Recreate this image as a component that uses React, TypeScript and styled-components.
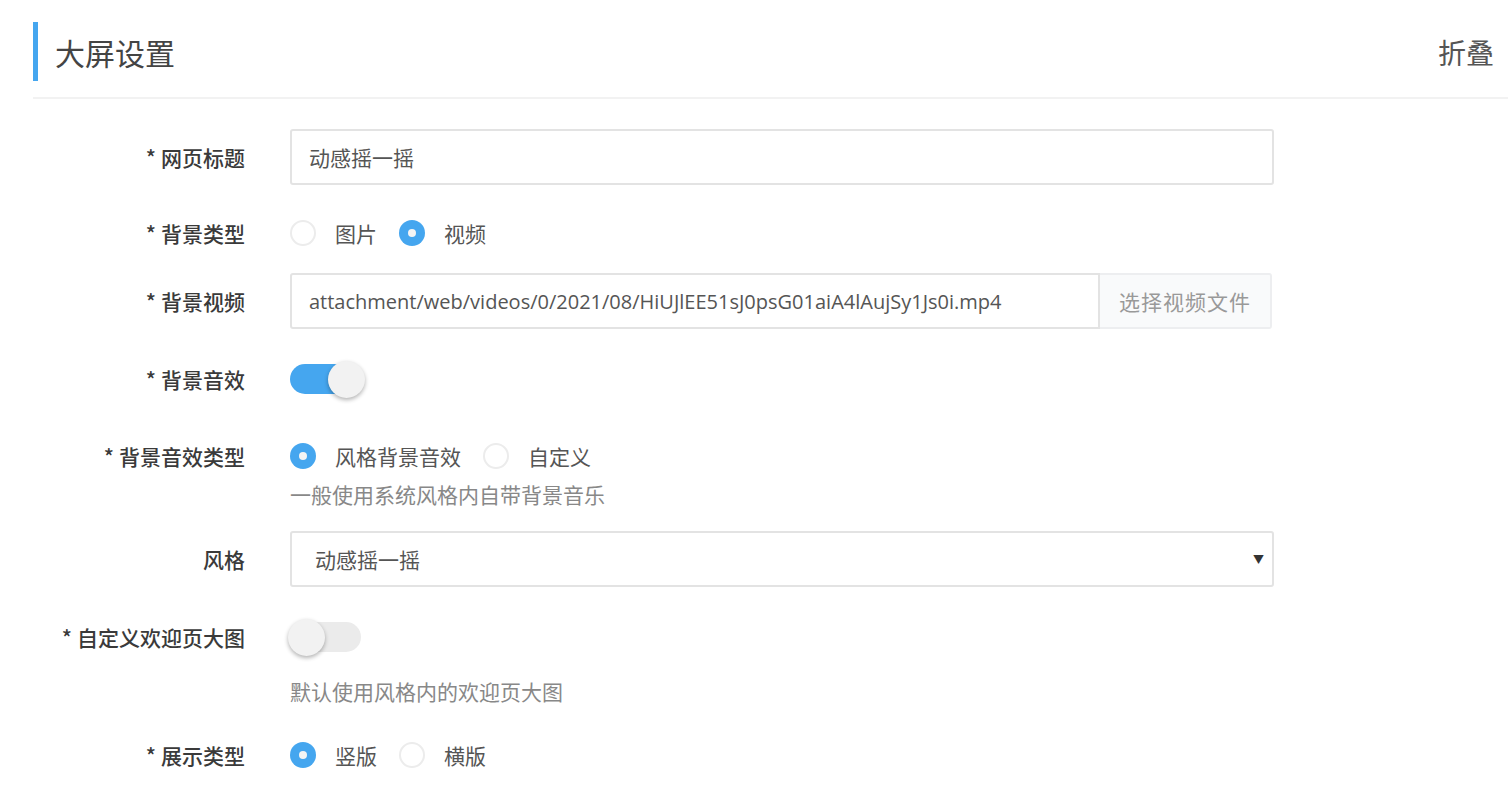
import { ReactNode } from "react"
import styled, { createGlobalStyle, css } from "styled-components"

const GlobalStyle = createGlobalStyle`
    html, body {
        margin: 0;
        padding: 0;
        background: #fff;
    }
    body {
        font-family: "Open Sans", "Noto Sans CJK SC", sans-serif;
        color: #333;
    }
    * {
        box-sizing: border-box;
    }
`

const BLUE = "#45a6ef"
const CJK = `"Noto Sans CJK SC", sans-serif`

export default function App() {
    return (
        <Page>
            <GlobalStyle />
            <Header>
                <Title>大屏设置</Title>
                <Collapse>折叠</Collapse>
            </Header>
            <Form>
                <Row label="网页标题" required top={30}>
                    <TextInput defaultValue="动感摇一摇" />
                </Row>
                <Row label="背景类型" required top={28}>
                    <RadioGroup>
                        <Radio label="图片" />
                        <Radio label="视频" checked />
                    </RadioGroup>
                </Row>
                <Row label="背景视频" required top={20}>
                    <InputGroup>
                        <GroupInput defaultValue="attachment/web/videos/0/2021/08/HiUJlEE51sJ0psG01aiA4lAujSy1Js0i.mp4" />
                        <Addon>选择视频文件</Addon>
                    </InputGroup>
                </Row>
                <Row label="背景音效" required top={30}>
                    <Toggle on />
                </Row>
                <Row label="背景音效类型" required top={37}>
                    <RadioGroup>
                        <Radio label="风格背景音效" checked />
                        <Radio label="自定义" />
                    </RadioGroup>
                </Row>
                <Help top={4}>一般使用系统风格内自带背景音乐</Help>
                <Row label="风格" top={23}>
                    <Select>
                        <span>动感摇一摇</span>
                        <Caret>▼</Caret>
                    </Select>
                </Row>
                <Row label="自定义欢迎页大图" required top={30}>
                    <Toggle />
                </Row>
                <Help top={20}>默认使用风格内的欢迎页大图</Help>
                <Row label="展示类型" required top={30}>
                    <RadioGroup>
                        <Radio label="竖版" checked />
                        <Radio label="横版" />
                    </RadioGroup>
                </Row>
            </Form>
        </Page>
    )
}

function Row(props: { label: string; required?: boolean; top: number; children: ReactNode }) {
    const { label, required, top, children } = props
    return (
        <FormRow top={top}>
            <Label>
                {required && <Star>*</Star>}
                {label}
            </Label>
            <Control>{children}</Control>
        </FormRow>
    )
}

function Radio(props: { label: string; checked?: boolean }) {
    return (
        <RadioItem>
            <RadioCircle checked={!!props.checked} />
            <RadioText>{props.label}</RadioText>
        </RadioItem>
    )
}

function Toggle(props: { on?: boolean }) {
    return (
        <Switch on={!!props.on}>
            <Knob on={!!props.on} />
        </Switch>
    )
}

const Page = styled.div`
    padding-left: 33px;
    padding-top: 22px;
    width: 1508px;
    height: 795px;
    overflow: hidden;
`

const Header = styled.div`
    display: flex;
    align-items: center;
    justify-content: space-between;
    padding-bottom: 16px;
    border-bottom: 2px solid #f2f2f2;
    height: 77px;
`

const Title = styled.h1`
    margin: 0;
    height: 59px;
    display: flex;
    align-items: center;
    border-left: 5px solid ${BLUE};
    padding-left: 17px;
    font-size: 30px;
    font-weight: 400;
    color: #444;
    font-family: ${CJK};
`

const Collapse = styled.span`
    font-size: 28px;
    color: #555;
    padding-right: 14px;
    font-family: ${CJK};
`

const Form = styled.div`
    display: flex;
    flex-direction: column;
`

const FormRow = styled.div<{ top: number }>`
    display: grid;
    grid-template-columns: 212px 984px;
    column-gap: 45px;
    align-items: center;
    margin-top: ${({ top }) => top}px;
`

const Label = styled.div`
    text-align: right;
    font-size: 21px;
    font-weight: 500;
    color: #3a3a3a;
    font-family: ${CJK};
    white-space: nowrap;
`

const Star = styled.span`
    margin-right: 5px;
`

const Control = styled.div`
    display: flex;
    align-items: center;
    min-height: 40px;
`

const inputBase = css`
    height: 56px;
    border: 2px solid #e3e3e3;
    border-radius: 3px;
    font-size: 21px;
    color: #555;
    outline: none;
    background: #fff;
`

const TextInput = styled.input`
    ${inputBase};
    width: 984px;
    padding: 0 17px;
    font-family: ${CJK};
`

const InputGroup = styled.div`
    display: flex;
    width: 982px;
    height: 56px;
`

const GroupInput = styled.input`
    ${inputBase};
    flex: 1;
    min-width: 0;
    font-size: 20px;
    border-radius: 3px 0 0 3px;
    padding: 0 17px;
    font-family: "Open Sans", "Noto Sans CJK SC", sans-serif;
`

const Addon = styled.div`
    width: 172px;
    display: flex;
    align-items: center;
    justify-content: center;
    background: #f9fafb;
    border: 2px solid #edeef0;
    border-left: none;
    border-radius: 0 3px 3px 0;
    font-size: 21px;
    color: #999;
    font-family: ${CJK};
    letter-spacing: 1px;
`

const Select = styled.div`
    ${inputBase};
    width: 984px;
    display: flex;
    align-items: center;
    justify-content: space-between;
    padding: 0 8px 0 23px;
    font-family: ${CJK};
`

const Caret = styled.span`
    font-size: 11px;
    color: #333;
`

const RadioGroup = styled.div`
    display: flex;
    align-items: center;
    gap: 22px;
`

const RadioItem = styled.label`
    display: flex;
    align-items: center;
    gap: 19px;
`

const RadioCircle = styled.span<{ checked: boolean }>`
    width: 26px;
    height: 26px;
    border-radius: 50%;
    display: inline-flex;
    align-items: center;
    justify-content: center;
    ${({ checked }) =>
        checked
            ? css`
                  background: ${BLUE};
                  &::after {
                      content: "";
                      width: 8px;
                      height: 8px;
                      border-radius: 50%;
                      background: #f4f4f4;
                  }
              `
            : css`
                  border: 2px solid #ececec;
                  background: #fff;
              `}
`

const RadioText = styled.span`
    font-size: 21px;
    color: #555;
    font-family: ${CJK};
`

const Switch = styled.div<{ on: boolean }>`
    position: relative;
    width: 70px;
    height: 30px;
    border-radius: 15px;
    background: ${({ on }) => (on ? BLUE : "#ebebeb")};
    margin-left: ${({ on }) => (on ? "0" : "1px")};
`

const Knob = styled.span<{ on: boolean }>`
    position: absolute;
    top: -3px;
    ${({ on }) => (on ? "right: -5px;" : "left: -3px;")}
    width: 37px;
    height: 37px;
    border-radius: 50%;
    background: #f2f2f2;
    box-shadow: 0 2px 4px rgba(0, 0, 0, 0.3);
`

const Help = styled.div<{ top: number }>`
    margin-top: ${({ top }) => top}px;
    margin-left: 257px;
    font-size: 21px;
    line-height: 28px;
    color: #888;
    font-family: ${CJK};
`
